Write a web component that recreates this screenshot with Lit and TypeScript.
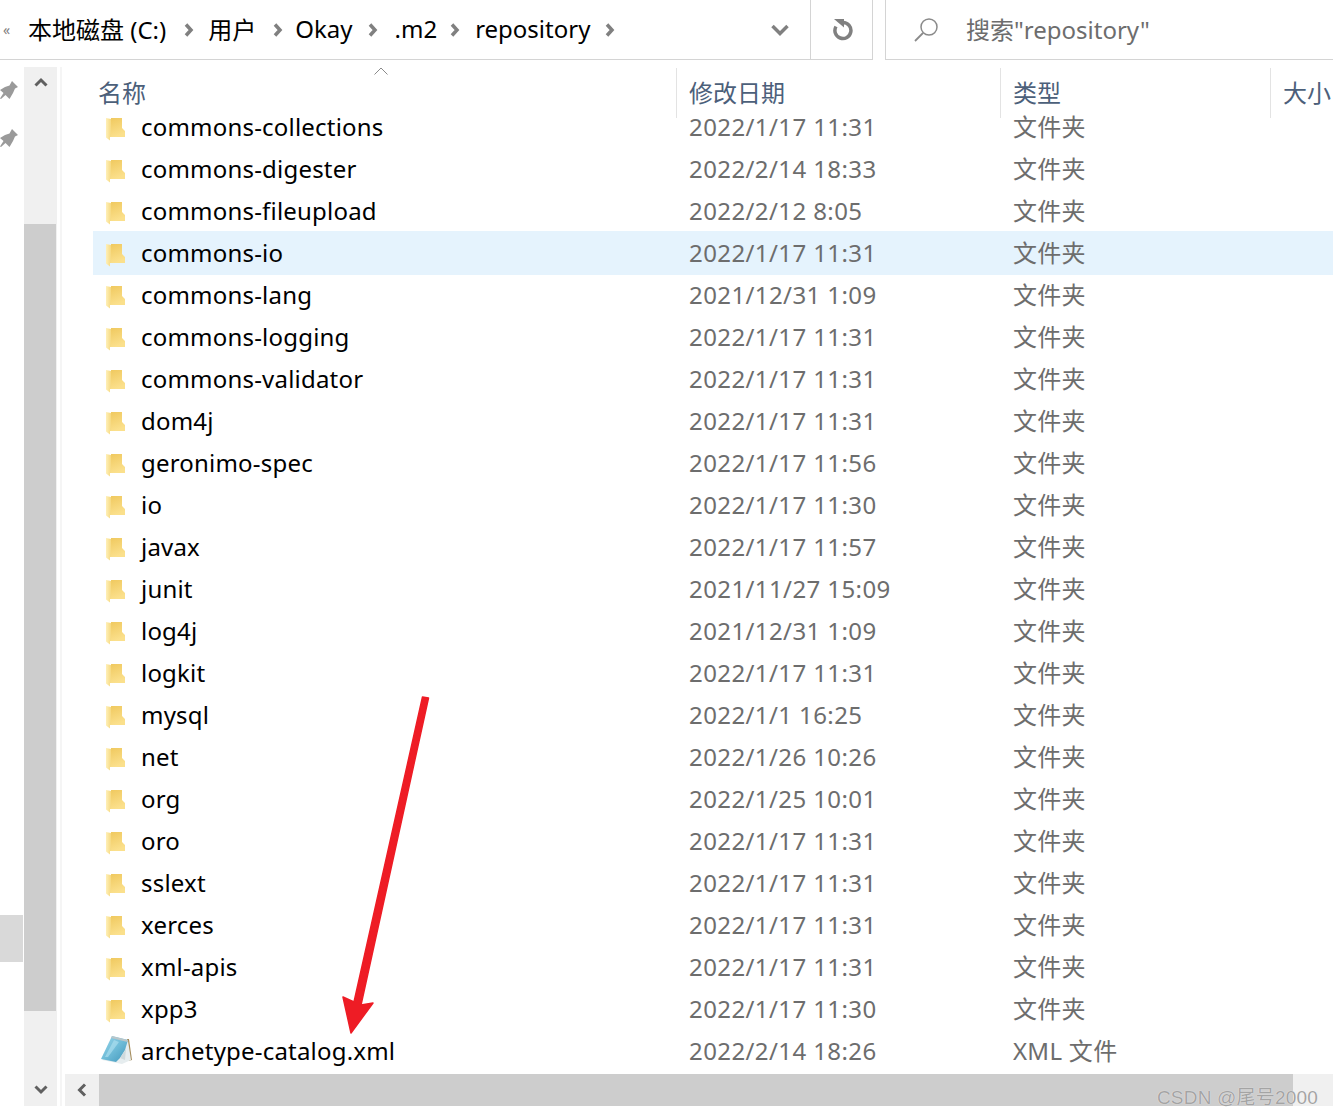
import { LitElement, html, css, svg } from "lit";
import { customElement } from "lit/decorators.js";
import { styleMap } from "lit/directives/style-map.js";

const rows: [string, string][] = [
  ["commons-collections", "2022/1/17 11:31"],
  ["commons-digester", "2022/2/14 18:33"],
  ["commons-fileupload", "2022/2/12 8:05"],
  ["commons-io", "2022/1/17 11:31"],
  ["commons-lang", "2021/12/31 1:09"],
  ["commons-logging", "2022/1/17 11:31"],
  ["commons-validator", "2022/1/17 11:31"],
  ["dom4j", "2022/1/17 11:31"],
  ["geronimo-spec", "2022/1/17 11:56"],
  ["io", "2022/1/17 11:30"],
  ["javax", "2022/1/17 11:57"],
  ["junit", "2021/11/27 15:09"],
  ["log4j", "2021/12/31 1:09"],
  ["logkit", "2022/1/17 11:31"],
  ["mysql", "2022/1/1 16:25"],
  ["net", "2022/1/26 10:26"],
  ["org", "2022/1/25 10:01"],
  ["oro", "2022/1/17 11:31"],
  ["sslext", "2022/1/17 11:31"],
  ["xerces", "2022/1/17 11:31"],
  ["xml-apis", "2022/1/17 11:31"],
  ["xpp3", "2022/1/17 11:30"],
];

// text, space before the chevron, space after it
const crumbs: [string, number, number][] = [
  ["本地磁盘 (C:)", 18, 14],
  ["用户", 17, 12],
  ["Okay", 15, 17],
  [".m2", 13, 15],
  ["repository", 15, 0],
];

const chevronRight = (before: number, after: number) =>
  html`<svg
    class="crumb-sep"
    style=${styleMap({ marginLeft: `${before}px`, marginRight: `${after}px` })}
    width="10"
    height="14"
    viewBox="0 0 10 14"
  >
    <path d="M2 1.500 L7 7 L2 12.500" fill="none" stroke="#808080" stroke-width="3.500" />
  </svg>`;

const pin = html`<svg class="pin" width="18" height="18" viewBox="0 0 18 18">
  <path
    d="M12 0 L18 6 L15 7.500 L13 12 L9.500 18 L5.500 14 L1 18 L0 17.500 L3.500 12 L0 9 L5 6 L9.500 4.500 Z"
    fill="#9a9a9a"
  />
</svg>`;

const folder = html`<svg class="icon" width="20" height="24" viewBox="0 0 20 24">
  <defs>
    <linearGradient id="fb" x1="0" y1="0" x2="0.3" y2="1">
      <stop offset="0" stop-color="#f0c95f" />
      <stop offset="1" stop-color="#fbe08c" />
    </linearGradient>
    <linearGradient id="ff" x1="0" y1="0" x2="1" y2="0">
      <stop offset="0" stop-color="#fff0b8" />
      <stop offset="1" stop-color="#f6d980" />
    </linearGradient>
  </defs>
  <path d="M6 1 H17 V11 L20 14 V20 H6 Z" fill="url(#fb)" />
  <path d="M1 1 L6 2 V20 L5 20 V23.500 L1 20.500 Z" fill="url(#ff)" />
</svg>`;

const notepad = html`<svg class="note" width="32" height="30" viewBox="0 0 32 30">
  <defs>
    <linearGradient id="np" x1="0" y1="0" x2="1" y2="1">
      <stop offset="0" stop-color="#9ad6ea" />
      <stop offset="0.500" stop-color="#6fbcd8" />
      <stop offset="1" stop-color="#3f95ba" />
    </linearGradient>
  </defs>
  <path d="M26 4 L28 4 L31 25 L27 26 Z" fill="#a58c5c" />
  <path d="M27 6 L30 25 L21 29 L1 25 Z" fill="#e6edef" />
  <path d="M11 1 L27 5 L24 15 L19 23 L15 27 L0 24 Z" fill="url(#np)" />
  <path d="M11 1 L27 5 L26.500 7 L10 3 Z" fill="#b9c6ca" />
  <path d="M13 5 L18 7 L7 22 L4 22 Z" fill="#b4e3f1" opacity="0.600" />
  <path d="M19 23 L25 14 L24 25 Z" fill="#cfd9dc" />
</svg>`;

@customElement("app-root")
export class AppRoot extends LitElement {
  static styles = css`
    :host {
      display: flex;
      flex-direction: column;
      position: relative;
      width: 1333px;
      height: 1117px;
      overflow: hidden;
      background: #fff;
      font-family: "Noto Sans", "Noto Sans CJK SC", sans-serif;
      font-size: 24px;
      color: #000;
    }
    .top {
      display: flex;
      align-items: stretch;
      height: 60px;
      flex: none;
    }
    .path {
      display: flex;
      align-items: center;
      width: 811px;
      box-sizing: border-box;
      padding-left: 3px;
      border-right: 1px solid #d4d4d4;
      border-bottom: 1px solid #d4d4d4;
    }
    .more {
      font-size: 14px;
      color: #808080;
      width: 25px;
    }
    .crumb {
      white-space: nowrap;
      margin-top: -2px;
    }
    .crumb-sep {
      flex: none;
    }
    .down {
      margin-left: auto;
      margin-right: 21px;
    }
    .refresh {
      width: 62px;
      display: flex;
      align-items: center;
      justify-content: center;
      box-sizing: border-box;
      border-right: 1px solid #d4d4d4;
      border-bottom: 1px solid #d4d4d4;
    }
    .search {
      flex: 1;
      margin-left: 12px;
      box-sizing: border-box;
      border-left: 1px solid #d4d4d4;
      border-bottom: 1px solid #d4d4d4;
      display: flex;
      align-items: center;
      padding-left: 27px;
      gap: 27px;
      color: #6d6d6d;
    }
    .search span {
      margin-top: -2px;
    }
    .body {
      flex: none;
      display: flex;
      height: 1046px;
    }
    .side {
      width: 24px;
      flex: none;
      display: flex;
      flex-direction: column;
    }
    .pin {
      margin-top: 21px;
      flex: none;
    }
    .pin + .pin {
      margin-top: 30px;
    }
    .side-mark {
      margin-top: 768px;
      width: 23px;
      height: 47px;
      background: #d9d9d9;
    }
    .vscroll {
      width: 33px;
      flex: none;
      margin-top: 7px;
      background: #f0f0f0;
      display: flex;
      flex-direction: column;
    }
    .vbtn {
      height: 157px;
      display: flex;
      justify-content: center;
      padding-top: 9px;
      box-sizing: border-box;
    }
    .vthumb {
      height: 787px;
      width: 32px;
      background: #cdcdcd;
    }
    .vbtn.end {
      height: 95px;
      padding-top: 73px;
    }
    .gap {
      width: 2px;
      flex: none;
      margin: 7px 3px 0;
      background: #f5f5f5;
    }
    .main {
      flex: 1;
      min-width: 0;
      display: flex;
      flex-direction: column;
    }
    .head {
      flex: none;
      height: 45px;
      padding-top: 8px;
      box-sizing: border-box;
      display: flex;
      position: relative;
      color: #4c607a;
    }
    .head div {
      flex: none;
      height: 50px;
      line-height: 50px;
      box-sizing: border-box;
      white-space: nowrap;
    }
    .h-name {
      width: 612px;
      padding-left: 33px;
      border-right: 1px solid #e3e3e3;
    }
    .h-date {
      width: 324px;
      padding-left: 12px;
      border-right: 1px solid #e3e3e3;
    }
    .h-type {
      width: 270px;
      padding-left: 12px;
      border-right: 1px solid #e3e3e3;
    }
    .h-size {
      padding-left: 12px;
    }
    .caret {
      position: absolute;
      left: 309px;
      top: 7px;
    }
    .list {
      flex: 1;
      min-height: 0;
      overflow: hidden;
      padding-left: 28px;
    }
    .row {
      display: flex;
      align-items: center;
      height: 42px;
      white-space: nowrap;
    }
    .row.hot {
      background: #e5f3fd;
      height: 44px;
      margin-bottom: -2px;
      padding-bottom: 2px;
      box-sizing: border-box;
    }
    .cell-icon {
      width: 48px;
      flex: none;
      display: flex;
      align-items: center;
      padding-left: 12px;
      box-sizing: border-box;
    }
    .icon {
      margin-top: 6px;
    }
    .note {
      margin-left: -4px;
    }
    .cell-name {
      width: 548px;
      flex: none;
      letter-spacing: 0.2px;
    }
    .cell-date {
      width: 324px;
      flex: none;
      color: #6d6d6d;
      letter-spacing: 0.4px;
    }
    .cell-type {
      color: #6d6d6d;
      margin-top: -2px;
      letter-spacing: 0.3px;
    }
    .hscroll {
      flex: none;
      height: 32px;
      display: flex;
      background: #f0f0f0;
    }
    .hbtn {
      width: 34px;
      display: flex;
      align-items: center;
      justify-content: center;
    }
    .hthumb {
      width: 1194px;
      background: #cdcdcd;
    }
    .mark {
      position: absolute;
      left: 0;
      top: 0;
      pointer-events: none;
    }
    .watermark {
      position: absolute;
      right: 15px;
      bottom: 7px;
      font-family: "Liberation Sans", "Noto Sans CJK SC", sans-serif;
      font-size: 19px;
      letter-spacing: 0.2px;
      color: #a4a4a4;
      text-shadow: 0 0 1px #fff;
      line-height: 24px;
    }
  `;

  private _row(name: string, date: string, type: string, icon: unknown) {
    return html`<div class="row ${name === "commons-io" ? "hot" : ""}">
      <div class="cell-icon">${icon}</div>
      <div class="cell-name">${name}</div>
      <div class="cell-date">${date}</div>
      <div class="cell-type">${type}</div>
    </div>`;
  }

  render() {
    return html`
      <div class="top">
        <div class="path">
          <span class="more">«</span>
          ${crumbs.map(
            ([c, before, after]) =>
              html`<span class="crumb">${c}</span>${chevronRight(before, after)}`
          )}
          <svg class="down" width="18" height="12" viewBox="0 0 18 12">
            <path d="M1.500 2 L9 9.500 L16.500 2" fill="none" stroke="#808080" stroke-width="3.500" />
          </svg>
        </div>
        <div class="refresh">
          <svg width="22" height="24" viewBox="0 0 22 24">
            <path
              d="M12 4.500 A8 8 0 1 1 5 8.500"
              fill="none"
              stroke="#808080"
              stroke-width="3.500"
            />
            <path d="M3 1 L13 1 L13 9.500 Z" fill="#808080" />
          </svg>
        </div>
        <div class="search">
          <svg width="26" height="26" viewBox="0 0 26 26">
            <circle cx="16" cy="10" r="8" fill="none" stroke="#8a8a8a" stroke-width="1.500" />
            <path d="M10 16 L2 24" stroke="#8a8a8a" stroke-width="1.800" />
          </svg>
          <span>搜索"repository"</span>
        </div>
      </div>
      <div class="body">
        <div class="side">${pin}${pin}<div class="side-mark"></div></div>
        <div class="vscroll">
          <div class="vbtn">
            <svg width="16" height="12" viewBox="0 0 16 12">
              <path d="M2.500 9.500 L8 4 L13.500 9.500" fill="none" stroke="#606060" stroke-width="3" />
            </svg>
          </div>
          <div class="vthumb"></div>
          <div class="vbtn end">
            <svg width="16" height="12" viewBox="0 0 16 12">
              <path d="M2.500 2.500 L8 8 L13.500 2.500" fill="none" stroke="#606060" stroke-width="3" />
            </svg>
          </div>
        </div>
        <div class="gap"></div>
        <div class="main">
          <div class="head">
            <div class="h-name">名称</div>
            <div class="h-date">修改日期</div>
            <div class="h-type">类型</div>
            <div class="h-size">大小</div>
            <svg class="caret" width="14" height="8" viewBox="0 0 14 8">
              <path d="M0.500 7.500 L7 1 L13.500 7.500" fill="none" stroke="#8a8a8a" stroke-width="1" />
            </svg>
          </div>
          <div class="list">
            ${rows.map(([n, d]) => this._row(n, d, "文件夹", folder))}
            ${this._row("archetype-catalog.xml", "2022/2/14 18:26", "XML 文件", notepad)}
          </div>
          <div class="hscroll">
            <div class="hbtn">
              <svg width="12" height="16" viewBox="0 0 12 16">
                <path d="M9 2.500 L3.500 8 L9 13.500" fill="none" stroke="#606060" stroke-width="3" />
              </svg>
            </div>
            <div class="hthumb"></div>
          </div>
        </div>
      </div>
      <svg class="mark" width="1333" height="1117" viewBox="0 0 1333 1117">
        ${svg`<path d="M422.500 697 L428.500 698 L361 1005 L373 1003 L351 1033 L343 997 L354 1002 Z" fill="#ee1c25" stroke="#ee1c25" stroke-width="1.500" stroke-linejoin="round" />`}
      </svg>
      <div class="watermark">CSDN @尾号2000</div>
    `;
  }
}
